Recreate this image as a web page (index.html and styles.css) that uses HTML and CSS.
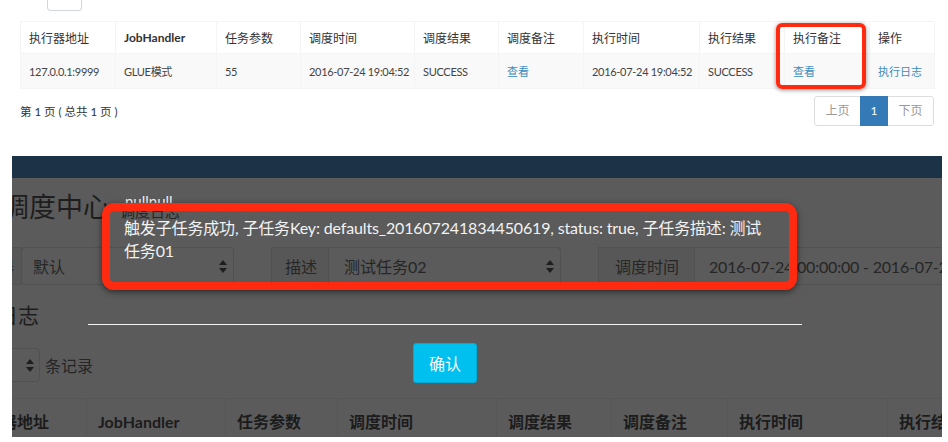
FILE: index.html
```html
<!DOCTYPE html>
<html lang="zh-CN">
<head>
<meta charset="utf-8">
<title>调度日志</title>
<link rel="stylesheet" href="styles.css">
</head>
<body>
<section class="top">
  <div class="stub"></div>
  <table class="tbl">
    <colgroup>
      <col style="width:95px"><col style="width:101px"><col style="width:84px"><col style="width:114px"><col style="width:84px"><col style="width:85px"><col style="width:116px"><col style="width:85px"><col style="width:85px"><col style="width:65px">
    </colgroup>
    <thead>
      <tr><th>执行器地址</th><th class="b">JobHandler</th><th>任务参数</th><th>调度时间</th><th>调度结果</th><th>调度备注</th><th>执行时间</th><th>执行结果</th><th>执行备注</th><th>操作</th></tr>
    </thead>
    <tbody>
      <tr><td>127.0.0.1:9999</td><td>GLUE模式</td><td>55</td><td>2016-07-24 19:04:52</td><td>SUCCESS</td><td><a class="lnk">查看</a></td><td>2016-07-24 19:04:52</td><td>SUCCESS</td><td><a class="lnk">查看</a></td><td><a class="lnk">执行日志</a></td></tr>
    </tbody>
  </table>
  <div class="pager-row">
    <span class="info">第 1 页 ( 总共 1 页 )</span>
    <ul class="pager">
      <li class="pg pg-first">上页</li>
      <li class="pg pg-active">1</li>
      <li class="pg pg-last">下页</li>
    </ul>
  </div>
  <div class="mark mark-sm"></div>
</section>

<section class="shot">
  <div class="navbar"></div>
  <div class="content">
    <div class="hdr"><h1 class="title">调度中心</h1><small class="sub">调度日志</small></div>
    <div class="filters">
      <div class="grp grp1">
        <span class="addon addon1">执行器</span>
        <span class="sel sel1">默认<svg class="arr" width="8" height="13" viewBox="0 0 8 13"><path d="M4 0L8 5H0Z M4 13L0 8H8Z"/></svg></span>
      </div>
      <div class="grp">
        <span class="addon addon2">描述</span>
        <span class="sel sel2">测试任务02<svg class="arr" width="8" height="13" viewBox="0 0 8 13"><path d="M4 0L8 5H0Z M4 13L0 8H8Z"/></svg></span>
      </div>
      <div class="grp">
        <span class="addon addon3">调度时间</span>
        <span class="sel sel3">2016-07-24 00:00:00 - 2016-07-25 23:59:59</span>
      </div>
    </div>
    <div class="boxtitle">调度日志</div>
    <div class="lenrow">
      <span class="lensel">10<svg class="arr" width="8" height="13" viewBox="0 0 8 13"><path d="M4 0L8 5H0Z M4 13L0 8H8Z"/></svg></span>
      <span class="lentxt">条记录</span>
    </div>
    <table class="tbl2">
      <colgroup>
        <col style="width:129px"><col style="width:139px"><col style="width:112px"><col style="width:159px"><col style="width:115px"><col style="width:116px"><col style="width:160px"><col style="width:150px">
      </colgroup>
      <thead>
        <tr><th>执行器地址</th><th>JobHandler</th><th>任务参数</th><th>调度时间</th><th>调度结果</th><th>调度备注</th><th>执行时间</th><th>执行结果</th></tr>
      </thead>
    </table>
  </div>
  <div class="modal">
    <div class="m-title">nullnull</div>
    <div class="m-body">触发子任务成功, 子任务Key: defaults_201607241834450619, status: true, 子任务描述: 测试<br>任务01</div>
    <div class="m-line"></div>
    <div class="m-foot"><button class="btn-ok">确认</button></div>
  </div>
  <div class="mark mark-lg"></div>
</section>
</body>
</html>
```
FILE: styles.css
```css
html, body {
  margin: 0;
  padding: 0;
  background: #fff;
}
body {
  font-family: "Lato", "Noto Sans CJK SC", sans-serif;
  color: #333;
  width: 948px;
  height: 442px;
  overflow: hidden;
}

/* ---------- top screenshot ---------- */
.top {
  position: relative;
  height: 156px;
}
.stub {
  margin-left: 47px;
  width: 33px;
  height: 10px;
  border: 1px solid #d2d6de;
  border-top: none;
  border-radius: 0 0 4px 4px;
}
.tbl {
  margin: 10px 0 0 20px;
  width: 914px;
  table-layout: fixed;
  border-collapse: collapse;
  font-size: 11px;
}
.tbl th, .tbl td {
  border: 1px solid #f4f4f4;
  padding: 0 8px;
  text-align: left;
  white-space: nowrap;
  overflow: hidden;
}
.tbl th {
  height: 31px;
  font-weight: normal;
  font-size: 12px;
  color: #333;
}
.tbl th.b { font-weight: bold; }
.tbl tbody tr { background: #f9f9f9; }
.tbl td {
  height: 34px;
  color: #444;
  letter-spacing: -0.3px;
}
.lnk { color: #3c8dbc; letter-spacing: 0; }
.pager-row {
  display: flex;
  align-items: center;
  justify-content: space-between;
  margin: 7px 0 0 20px;
  width: 914px;
}
.info {
  font-size: 11.5px;
  color: #333;
}
.pager {
  display: flex;
  list-style: none;
  margin: 0;
  padding: 0;
}
.pg {
  height: 28px;
  line-height: 28px;
  border: 1px solid #ddd;
  margin-left: -1px;
  text-align: center;
  font-size: 12px;
  color: #999;
  background: #fff;
}
.pg-first { width: 45px; border-radius: 3px 0 0 3px; }
.pg-active { width: 26px; background: #337ab7; border-color: #337ab7; color: #fff; position: relative; }
.pg-last { width: 45px; border-radius: 0 3px 3px 0; }

.mark {
  position: absolute;
  border: solid #ff2a10;
  box-shadow: 0 1px 4px rgba(0,0,0,.45);
  pointer-events: none;
}
.mark-sm {
  left: 776px;
  top: 23px;
  width: 82px;
  height: 58px;
  border-width: 4px;
  border-radius: 6px;
}

/* ---------- bottom screenshot ---------- */
.shot {
  position: relative;
  margin-left: 12px;
  width: 930px;
  height: 281px;
  overflow: hidden;
  background: #5b5b5b;
  color: #1e1e1e;
  font-family: "Lato", "Noto Sans CJK SC", sans-serif;
}
.navbar {
  height: 22px;
  background: #1c3247;
}
.content {
  width: 930px;
}
.hdr {
  display: flex;
  align-items: baseline;
  height: 56px;
  margin-left: -10px;
}
.title {
  margin: 12px 0 0 0;
  font-size: 27px;
  font-weight: normal;
  line-height: 34px;
  color: #1e1e1e;
}
.sub {
  margin-left: 10px;
  font-size: 15px;
  color: #262626;
}
.filters {
  display: flex;
  height: 38px;
  margin-top: 13px;
  font-size: 16px;
}
.grp {
  display: flex;
  margin-left: 37px;
}
.grp1 { margin-left: -60px; }
.addon, .sel {
  display: flex;
  align-items: center;
  box-sizing: border-box;
  height: 38px;
  border: 1px solid #515151;
  color: #262626;
  white-space: nowrap;
}
.addon {
  background: #575757;
  padding-left: 13px;
}
.addon1 { width: 70px; }
.addon2 { width: 58px; }
.addon3 { width: 97px; padding-left: 16px; }
.sel {
  position: relative;
  border-left: none;
  border-radius: 0 4px 4px 0;
}
.sel1 { width: 213px; padding-left: 11px; border-left: 1px solid #515151; border-radius: 4px; margin-left: -1px; }
.sel2 { width: 232px; padding-left: 15px; }
.sel3 { width: 320px; padding-left: 14px; border-radius: 0; letter-spacing: -0.2px; }
.arr {
  position: absolute;
  right: 6px;
  top: 12px;
  fill: #1e1e1e;
}
.boxtitle {
  margin: 18px 0 0 -57px;
  font-size: 21px;
  line-height: 24px;
  color: #1e1e1e;
}
.lenrow {
  display: flex;
  align-items: center;
  margin-top: 21px;
  height: 34px;
  font-size: 16px;
}
.lensel {
  position: relative;
  box-sizing: border-box;
  display: flex;
  align-items: center;
  width: 68px;
  height: 34px;
  margin-left: -40px;
  padding-left: 10px;
  border: 1px solid #515151;
  border-radius: 4px;
  color: #262626;
}
.lensel .arr { top: 10px; right: 5px; }
.lentxt {
  margin-left: 5px;
  color: #262626;
}
.tbl2 {
  margin: 16px 0 0 -55px;
  table-layout: fixed;
  border-collapse: collapse;
  width: 1080px;
  font-size: 16px;
}
.tbl2 th {
  height: 44px;
  padding: 0 11px;
  text-align: left;
  font-weight: bold;
  color: #1c1c1c;
  border: 1px solid #565656;
  border-bottom: none;
  white-space: nowrap;
}

/* modal (transparent layer) */
.modal {
  position: absolute;
  left: 76px;
  top: 0;
  width: 714px;
  height: 281px;
  color: #f2f2f2;
}
.m-title {
  position: absolute;
  left: 37px;
  top: 36px;
  font-size: 15px;
  line-height: 18px;
}
.m-body {
  position: absolute;
  left: 36px;
  top: 60px;
  width: 660px;
  font-size: 16px;
  line-height: 23px;
  letter-spacing: -0.15px;
}
.m-line {
  position: absolute;
  left: 0;
  top: 168px;
  width: 714px;
  height: 1px;
  background: #f4f4f4;
}
.m-foot {
  position: absolute;
  left: 0;
  top: 187px;
  width: 714px;
  display: flex;
  justify-content: center;
}
.btn-ok {
  width: 64px;
  height: 40px;
  border: 1px solid #00acd6;
  border-radius: 3px;
  background: #00c0ef;
  color: #fff;
  font-family: "Lato", "Noto Sans CJK SC", sans-serif;
  font-size: 16px;
  padding: 0;
}
.mark-lg {
  left: 90px;
  top: 47px;
  width: 679px;
  height: 71px;
  border-width: 8px;
  border-radius: 12px;
  box-shadow: 0 2px 6px rgba(0,0,0,.55);
}
```
